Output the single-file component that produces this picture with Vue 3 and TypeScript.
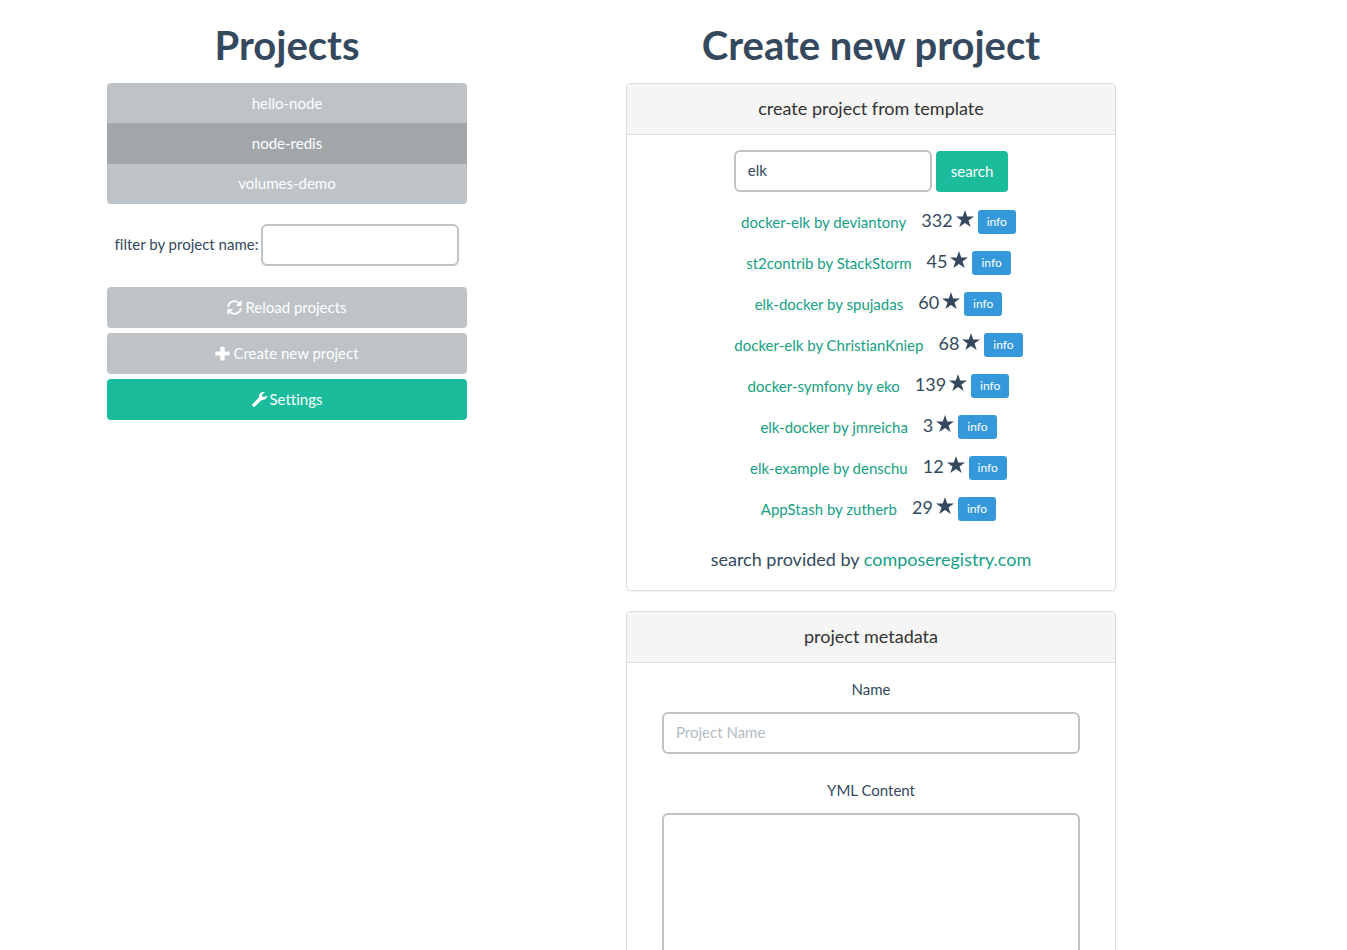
<script setup lang="ts">
import { computed, ref } from 'vue'

interface Template {
  name: string
  owner: string
  stars: number
}

const projects = ['hello-node', 'node-redis', 'volumes-demo']
const active = ref('node-redis')
const filter = ref('')
const query = ref('elk')
const projectName = ref('')
const yml = ref('')

const visibleProjects = computed(() => projects.filter((p) => p.includes(filter.value)))

const templates: Template[] = [
  { name: 'docker-elk', owner: 'deviantony', stars: 332 },
  { name: 'st2contrib', owner: 'StackStorm', stars: 45 },
  { name: 'elk-docker', owner: 'spujadas', stars: 60 },
  { name: 'docker-elk', owner: 'ChristianKniep', stars: 68 },
  { name: 'docker-symfony', owner: 'eko', stars: 139 },
  { name: 'elk-docker', owner: 'jmreicha', stars: 3 },
  { name: 'elk-example', owner: 'denschu', stars: 12 },
  { name: 'AppStash', owner: 'zutherb', stars: 29 },
]
</script>

<template>
  <div class="page">
    <div class="container">
      <aside class="sidebar">
        <h1>Projects</h1>
        <nav class="project-list">
          <a
            v-for="p in visibleProjects"
            :key="p"
            href="#"
            class="project"
            :class="{ active: p === active }"
            @click.prevent="active = p"
            >{{ p }}</a
          >
        </nav>
        <div class="filter">
          <label for="filter">filter by project name:</label>
          <input id="filter" v-model="filter" class="field short" type="text" />
        </div>
        <div class="actions">
          <button type="button" class="btn">
            <svg class="icon" viewBox="0 0 24 24" aria-hidden="true">
              <path d="M2 11A9.8 9.8 0 0 1 18.500 4.500" fill="none" stroke="currentColor" stroke-width="3" />
              <path d="M23.500 0V9.500H14z" />
              <path d="M22 13A9.8 9.8 0 0 1 5.500 19.500" fill="none" stroke="currentColor" stroke-width="3" />
              <path d="M.5 24V14.500H10z" />
            </svg>
            Reload projects
          </button>
          <button type="button" class="btn">
            <svg class="icon" viewBox="0 0 24 24" aria-hidden="true">
              <path
                d="M9.500 1h5a1 1 0 0 1 1 1v6.800h7a1 1 0 0 1 1 1v4.400a1 1 0 0 1-1 1h-7v6.800a1 1 0 0 1-1 1h-5a1 1 0 0 1-1-1v-6.800h-7a1 1 0 0 1-1-1v-4.400a1 1 0 0 1 1-1h7v-6.800a1 1 0 0 1 1-1z"
              />
            </svg>
            Create new project
          </button>
          <button type="button" class="btn primary">
            <svg class="icon" viewBox="0 0 24 24" aria-hidden="true">
              <path
                d="M20.500 0.300C17-.3 13.600.7 12 3.400c-1 1.600-1.100 3.300-.7 4.900L.5 19.700c-.6.600-.6 1.200 0 1.800l2 2c.6.600 1.200.6 1.800 0L15.600 12.600c3 .7 6-.4 7.500-3 .8-1.400 1-2.800.8-4.200l-4.600 2.400-3.300-.8.600-3.600z"
              />
            </svg>
            Settings
          </button>
        </div>
      </aside>

      <main class="content">
        <h1>Create new project</h1>
        <section class="panel">
          <h2 class="panel-heading">create project from template</h2>
          <div class="panel-body">
            <form class="search" @submit.prevent>
              <input v-model="query" class="field short" type="text" aria-label="search templates" />
              <button type="submit" class="btn primary">search</button>
            </form>
            <ul class="results">
              <li v-for="t in templates" :key="t.name + t.owner" class="result">
                <a href="#" class="repo">{{ t.name }} by {{ t.owner }}</a>
                <span class="count">{{ t.stars }}</span>
                <svg class="star" viewBox="0 0 18 18" aria-hidden="true">
                  <path d="M9 0l2.200 6.500H18L12.500 10.500 14.700 17 9 13 3.300 17 5.500 10.500 0 6.500H6.800z" />
                </svg>
                <button type="button" class="info">info</button>
              </li>
            </ul>
            <p class="credit">search provided by <a href="#">composeregistry.com</a></p>
          </div>
        </section>

        <section class="panel">
          <h2 class="panel-heading">project metadata</h2>
          <div class="panel-body metadata">
            <div class="group">
              <label for="name">Name</label>
              <input id="name" v-model="projectName" class="field" type="text" placeholder="Project Name" />
            </div>
            <div class="group">
              <label for="yml">YML Content</label>
              <textarea id="yml" v-model="yml" class="field" rows="12"></textarea>
            </div>
          </div>
        </section>
      </main>
    </div>
  </div>
</template>

<style>
body {
  margin: 0;
  background: #fff;
}
html {
  scrollbar-width: none;
}
</style>

<style scoped>
.page {
  box-sizing: border-box;
  padding-left: 7px;
  font-family: Lato, 'Liberation Sans', sans-serif;
  font-size: 15px;
  line-height: 21px;
  font-variant-ligatures: none;
  color: #34495e;
  text-align: center;
}
.page *,
.page *::before {
  box-sizing: border-box;
}
.container {
  display: grid;
  grid-template-columns: minmax(0, 360fr) minmax(0, 490fr);
  column-gap: 159px;
  align-items: start;
  max-width: 1170px;
  margin: 0 auto;
  padding: 0 146px 0 15px;
}
h1 {
  margin: 0;
  padding: 23px 0 16px;
  font-size: 40px;
  line-height: 44px;
  font-weight: 700;
  white-space: nowrap;
}
a {
  color: #16a085;
  text-decoration: none;
}
button,
input,
textarea {
  font: inherit;
}
.project-list {
  display: flex;
  flex-direction: column;
}
.project {
  position: relative;
  padding: 10px;
  background: #bdc3c7;
  color: #fff;
}
.project + .project {
  margin-top: -1px;
}
.project:first-child {
  border-radius: 4px 4px 0 0;
}
.project:last-child {
  border-radius: 0 0 4px 4px;
}
.project.active {
  z-index: 1;
  background: #a1a6a9;
}
.filter {
  display: flex;
  align-items: center;
  justify-content: center;
  gap: 3px;
  margin: 20px 0 21px;
}
.filter label {
  padding-bottom: 2px;
}
.field {
  display: block;
  width: 100%;
  height: 42px;
  margin: 0;
  padding: 7px 12px 9px;
  border: 2px solid #bdc3c7;
  border-radius: 6px;
  background: #fff;
  color: #34495e;
  outline: none;
}
.field::placeholder {
  color: #b2bcc5;
  opacity: 1;
}
.field.short {
  width: 198px;
}
textarea.field {
  height: 260px;
  resize: none;
}
.actions {
  display: flex;
  flex-direction: column;
  gap: 5px;
}
.btn {
  display: flex;
  align-items: center;
  justify-content: center;
  gap: 3px;
  padding: 10px 15px;
  border: 0;
  border-radius: 4px;
  background: #bdc3c7;
  color: #fff;
}
.btn.primary {
  background: #1abc9c;
}
.icon {
  width: 15px;
  height: 15px;
  margin-bottom: 1px;
  fill: currentColor;
}
.panel {
  margin-bottom: 20px;
  border: 1px solid #ddd;
  border-radius: 4px;
  box-shadow: 0 1px 1px rgba(0, 0, 0, 0.05);
}
.panel-heading {
  margin: 0;
  padding: 14px 15px 16px;
  border-bottom: 1px solid #ddd;
  border-radius: 3px 3px 0 0;
  background: #f5f5f5;
  color: #333;
  font-size: 18px;
  line-height: 20px;
  font-weight: 400;
}
.panel-body {
  padding: 15px;
}
.search {
  display: flex;
  align-items: flex-end;
  justify-content: center;
  gap: 4px;
}
.results {
  margin: 9px 0 0;
  padding: 0;
  list-style: none;
}
.result {
  display: flex;
  align-items: center;
  justify-content: center;
  height: 41px;
  padding-left: 15px;
}
.repo {
  margin-right: 15px;
  padding-top: 1px;
}
.count {
  padding-bottom: 3px;
  font-size: 18px;
}
.star {
  width: 18px;
  height: 18px;
  margin: 0 4px 6px 3px;
  fill: #34495e;
}
.info {
  padding: 3px 9px;
  border: 0;
  border-radius: 3px;
  background: #3498db;
  color: #fff;
  font-size: 12px;
  line-height: 18px;
}
.credit {
  margin: 20px 0 6px;
  font-size: 18px;
  line-height: 20px;
}
.metadata {
  padding: 16px 35px 15px;
}
.group {
  margin-bottom: 26px;
}
.group label {
  display: block;
  margin-bottom: 12px;
}
</style>
